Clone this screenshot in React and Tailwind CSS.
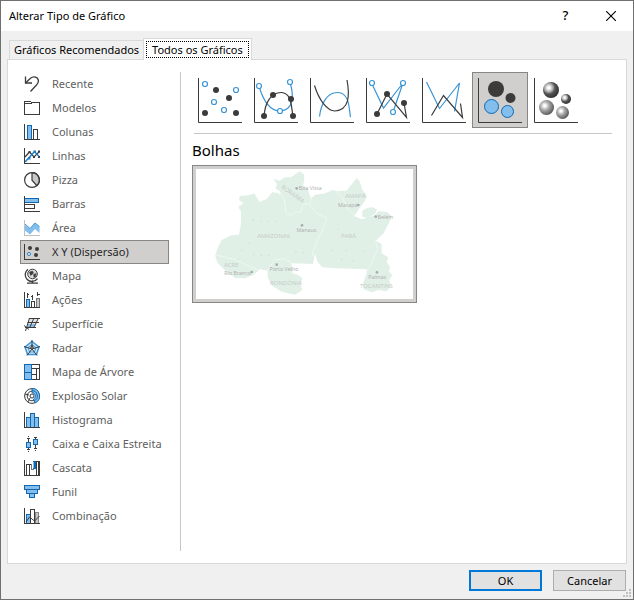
import { useState } from 'react'

const DARK = '#3b3b3b'
const BLUE = '#1f7ec7'
const DEEP = '#0f68b0'
const SKY = '#83beec'

const categories = [
  {
    name: 'Recente',
    icon: (
      <g fill="none" stroke={DARK} strokeWidth="1.3">
        <path d="M1.5 0.5v6.500h6.500" />
        <path d="M1.5 7 6.500 2.300C9.500-.3 14 1 14.400 4.600c.2 2-.6 3.200-1.900 4.400L6.500 15.500" />
      </g>
    ),
  },
  {
    name: 'Modelos',
    icon: (
      <g fill="none" stroke={DARK} shapeRendering="crispEdges">
        <path d="M.5 14.500V1.500h6l1 1h8v12zM.5 3.500h7" />
      </g>
    ),
  },
  {
    name: 'Colunas',
    icon: (
      <g fill="none" stroke={DARK} shapeRendering="crispEdges">
        <path d="M3.500 15V1.500h4V15" fill={SKY} stroke={DEEP} />
        <path d="M9.500 15V5.500h4V15" />
        <path d="M.5 0v15.500H16" />
      </g>
    ),
  },
  {
    name: 'Linhas',
    icon: (
      <g fill="none" stroke={DARK}>
        <path d="M1 9l4.500-5L10 9l5.500-5.500" strokeWidth="1.200" />
        <path d="M4.500 3h2v2h-2zM9 8h2v2H9zM14 2.500h2v2h-2zM14 8h2v2h-2z" fill={DARK} stroke="none" />
        <path d="M1 14 10.500 3.500l4.500 5" stroke={BLUE} strokeWidth="1.500" />
        <path d="M4 9h2.500v2.500H4zM9.500 2.500H12V5H9.500z" fill={BLUE} stroke="none" />
        <path d="M.5 0v15.500H16" shapeRendering="crispEdges" />
      </g>
    ),
  },
  {
    name: 'Pizza',
    icon: (
      <g fill="none" stroke={DARK} strokeWidth="1.200">
        <path d="M8 .7v7.500l4.800 5.500A7.400 7.400 0 0 0 8 .7z" fill="#c8c8c8" />
        <circle cx="8" cy="8" r="7.400" />
      </g>
    ),
  },
  {
    name: 'Barras',
    icon: (
      <g fill="none" stroke={DARK} shapeRendering="crispEdges">
        <path d="M1 2.500h13.500v4H1" fill={SKY} stroke={DEEP} />
        <path d="M1 8.500h9.500v4H1" />
        <path d="M.5 0v15.500H16" />
      </g>
    ),
  },
  {
    name: 'Área',
    icon: (
      <g fill="none">
        <path d="M.5 4.500 6 8.500l5-5.500 4.500 3.500V13L11 9l-5 5.500L.5 10z" fill={SKY} />
        <path d="M1 4l5 4.500 5-5.500 4.500 3.500" stroke="#4b9ad6" />
        <path d="M.5 0v15.500H16" stroke="#c0c0c0" shapeRendering="crispEdges" />
      </g>
    ),
  },
  {
    name: 'X Y (Dispersão)',
    icon: (
      <g fill={DARK}>
        <circle cx="6" cy="4" r="2" />
        <circle cx="13" cy="5" r="2" />
        <circle cx="12" cy="11" r="2" />
        <circle cx="5" cy="10" r="1.500" fill="#fff" stroke={BLUE} />
        <path d="M.5 0v15.500H16" fill="none" stroke={DARK} shapeRendering="crispEdges" />
      </g>
    ),
  },
  {
    name: 'Mapa',
    icon: (
      <g fill="none" stroke={DARK}>
        <circle cx="8.500" cy="6" r="4.800" fill="#dcdcdc" />
        <path d="M5.500 4l3-1 1 2-2 2-1 .5zM9.500 6.500l2.500-1-.5 3-1.500 1z" fill={DARK} strokeWidth=".5" />
        <path d="M4 1.200a6.800 6.800 0 1 0 9.500 9.500" strokeWidth="1.300" />
        <path d="M8.500 12.500v2M3 15.200h11" strokeWidth="1.300" />
      </g>
    ),
  },
  {
    name: 'Ações',
    icon: (
      <g fill="none" stroke={DARK} shapeRendering="crispEdges">
        <path d="M2.500 15V7.500h3V15" fill={SKY} stroke={DEEP} />
        <path d="M7.500 15v-5.500h3V15" />
        <path d="M12.500 15V6.500h3V15" fill="#c8c8c8" stroke="#777" />
        <path d="M3.500 1v5M3.500 2.500H5M8.500 3v5M7 4.500h2M13.500 0v4M13 2.500h2.500" />
        <path d="M.5 0v15.500H16" />
      </g>
    ),
  },
  {
    name: 'Superfície',
    icon: (
      <g fill="none" stroke={DARK}>
        <path d="M5 3h9.500l-2 5-2 4H2z" fill="#e3e3e3" stroke="none" />
        <path d="M4 8h7l-2 4H3z" fill={SKY} stroke="none" />
        <path d="M5 2.500h11M3.500 6.500H15M1 11.500h11M5.500 2 1.500 15M10 2 5.500 12M14.500 2 9.500 12M0 9.500l5 4" />
      </g>
    ),
  },
  {
    name: 'Radar',
    icon: (
      <g fill="none" stroke={DARK}>
        <path d="M8 1.500 15 7l-2.500 7.500h-9L1 7z" fill="#d4eafa" stroke="#3a95d6" strokeWidth="1.500" />
        <path d="M8 4.500l4 3-1.500 4.500h-5L4 7.500z" stroke="#3a95d6" />
        <path d="M8 0v9l5 6.500M8 9l-5 6.500M0 6.500 8 9l8-2.500" />
        <path d="M8 5l1.500 3M8 5 6.500 8" />
      </g>
    ),
  },
  {
    name: 'Mapa de Árvore',
    icon: (
      <g fill="none" shapeRendering="crispEdges">
        <path d="M8 .5h7.500v15H8M8 4.500h7.500M12.500 4.500v11M8 10.500h4.500" stroke={DARK} />
        <path d="M.5.5h7v15h-7zM.5 8.500h7" fill={SKY} stroke={DEEP} />
      </g>
    ),
  },
  {
    name: 'Explosão Solar',
    icon: (
      <g fill="none">
        <circle cx="8" cy="8" r="7.400" stroke={DARK} />
        <circle cx="8" cy="8" r="4.800" stroke={DARK} />
        <path d="M8 .5a7.500 7.500 0 0 1 3 14.400L9.500 11A3.300 3.300 0 0 0 8 4.700z" fill={SKY} stroke={DEEP} />
        <path d="M8 2.700a5.300 5.300 0 0 1 2.300 10.100" stroke={DEEP} />
        <circle cx="8" cy="8" r="2" stroke={DARK} fill="#fff" />
        <path d="M1 6l4 1M4 14l2-4" stroke={DARK} />
      </g>
    ),
  },
  {
    name: 'Histograma',
    icon: (
      <g shapeRendering="crispEdges">
        <path d="M2.500 15.500v-10h4v-4h4v4h4v10z" fill={SKY} stroke={DEEP} />
        <path d="M6.500 5v10M10.500 4v11" fill="none" stroke={DEEP} />
        <path d="M.5 0v15.500H16" fill="none" stroke={DARK} />
      </g>
    ),
  },
  {
    name: 'Caixa e Caixa Estreita',
    icon: (
      <g shapeRendering="crispEdges">
        <path d="M4.500 2v12M3 2.500h3M3 13.500h3M11.500 1v11M10 1.500h3M10 12.500h3M4.500 15v1M11.500 14v1M4.500 0v1" fill="none" stroke={DARK} />
        <path d="M2.500 6.500h4v5h-4zM9.500 3.500h4v5h-4z" fill={SKY} stroke={DEEP} />
      </g>
    ),
  },
  {
    name: 'Cascata',
    icon: (
      <g fill="none" stroke={DARK} shapeRendering="crispEdges">
        <path d="M2.500 15V4.500h3V15M5.500 4.500h2M12.500 15V1.500h2V15" />
        <path d="M7.500 4v5.500h2" stroke="#777" />
        <path d="M9 1h3v8H9z" fill={DEEP} stroke="none" />
        <path d="M9.500 2v6" stroke={SKY} />
        <path d="M.5 0v15.500H15.500V1" />
      </g>
    ),
  },
  {
    name: 'Funil',
    icon: (
      <g fill={SKY} stroke={DEEP} shapeRendering="crispEdges">
        <path d="M.5 1.500h15v4H.5zM2.500 5.500h11v4h-11zM5.500 9.500h5v4h-5z" />
      </g>
    ),
  },
  {
    name: 'Combinação',
    icon: (
      <g stroke={DARK} fill="none">
        <path d="M2.500 15V6.500h4V15" fill={SKY} stroke={DEEP} shapeRendering="crispEdges" />
        <path d="M11 15V4.500h3.500V15" fill="#c8c8c8" stroke="#888" shapeRendering="crispEdges" />
        <path d="M6.500 15V1.500h4V15" fill="#fff" shapeRendering="crispEdges" />
        <path d="M2 14 5.500 9l5 4L15.500 8" />
        <path d="M.5 0v15.500H16" shapeRendering="crispEdges" />
      </g>
    ),
  },
]

function Solid({ points, r = 3 }) {
  return points.map(([x, y]) => <circle key={`${x}-${y}`} cx={x} cy={y} r={r} fill={DARK} />)
}

function Hollow({ points }) {
  return points.map(([x, y]) => (
    <circle key={`${x}-${y}`} cx={x} cy={y} r="2.500" fill="#fff" stroke="#3a95d6" strokeWidth="1.200" />
  ))
}

function Line({ d, color = DARK }) {
  return <path d={d} fill="none" stroke={color} strokeWidth="1.200" />
}

const subtypes = [
  {
    name: 'Dispersão',
    art: (
      <>
        <Hollow points={[[13, 12], [44, 18], [22, 30], [32, 38]]} />
        <Solid points={[[24, 18], [37, 26], [13, 41], [44, 41]]} />
      </>
    ),
  },
  {
    name: 'Dispersão com Linhas Suaves e Marcadores',
    art: (
      <>
        <Line d="M11 14C15 28 22 39 32 39C46 38 46 24 42 10" color="#3a95d6" />
        <Line d="M16 44C17 32 22 20 34 20.500C44 22 43 34 45 44" />
        <Hollow points={[[11, 14], [42, 10], [32, 39]]} />
        <Solid points={[[25, 23], [43, 27], [16, 44], [45, 44]]} />
      </>
    ),
  },
  {
    name: 'Dispersão com Linhas Suaves',
    art: (
      <>
        <Line d="M15.500 44.500C17 32 23 20 34 20.500C46 21 45 38 46.500 45" color="#3a95d6" />
        <Line d="M10.500 13.500C15 28 23 39 31 39C45 38 46 24 43 8" />
      </>
    ),
  },
  {
    name: 'Dispersão com Linhas Retas e Marcadores',
    art: (
      <>
        <Line d="M11.500 11 23.500 36 43 11 33 40" color="#3a95d6" />
        <Line d="M17 42 27 22 46.500 45.500 44 31" />
        <Hollow points={[[12, 11], [43, 11], [33, 40]]} />
        <Solid points={[[27, 22], [17, 42], [44, 31]]} />
      </>
    ),
  },
  {
    name: 'Dispersão com Linhas Retas',
    art: (
      <>
        <Line d="M10.500 10 23.500 36.500 43.500 11 38.500 39.500" color="#3a95d6" />
        <Line d="M15.500 43.500 27.500 23.500 46.500 45.500 44.500 31.500" />
      </>
    ),
  },
  {
    name: 'Bolhas',
    art: (
      <>
        <Solid points={[[24, 17]]} r={8} />
        <Solid points={[[38.5, 26]]} r={5} />
        <g fill={SKY} stroke={DEEP}>
          <circle cx="19.500" cy="34.500" r="7" />
          <circle cx="35.500" cy="39.500" r="6" />
        </g>
      </>
    ),
  },
  {
    name: 'Bolhas 3D',
    art: (
      <>
        <defs>
          <radialGradient id="ball-dark" cx=".36" cy=".36" r=".65">
            <stop offset=".1" stopColor="#fff" />
            <stop offset=".4" stopColor="#aaa" />
            <stop offset=".6" stopColor="#555" />
            <stop offset="1" stopColor="#333" />
          </radialGradient>
          <radialGradient id="ball-light" cx=".38" cy=".38" r=".65">
            <stop offset=".1" stopColor="#fff" />
            <stop offset=".45" stopColor="#aaa" />
            <stop offset="1" stopColor="#555" />
          </radialGradient>
        </defs>
        <circle cx="23" cy="18" r="8" fill="url(#ball-dark)" />
        <circle cx="38" cy="27" r="5" fill="url(#ball-dark)" />
        <circle cx="18.500" cy="35.500" r="7.500" fill="url(#ball-light)" />
        <circle cx="34.500" cy="40.500" r="6.500" fill="url(#ball-light)" />
      </>
    ),
  },
]

const states = [
  { name: 'AMAZONAS', x: 266, y: 293 },
  { name: 'PARÁ', x: 491, y: 293 },
  { name: 'AMAPÁ', x: 511, y: 175 },
  { name: 'ACRE', x: 139, y: 382 },
  { name: 'RONDÔNIA', x: 303, y: 436 },
  { name: 'TOCANTINS', x: 574, y: 444 },
]

const capitals = [
  { name: 'Boa Vista', x: 376, y: 149, dot: [335, 145] },
  { name: 'Macapá', x: 488, y: 201, dot: [520, 195] },
  { name: 'Belém', x: 601, y: 237, dot: [572, 230] },
  { name: 'Manaus', x: 364, y: 277, dot: [351, 256] },
  { name: 'Porto Velho', x: 297, y: 392, dot: [275, 374] },
  { name: 'Rio Branco', x: 158, y: 406, dot: [200, 396] },
  { name: 'Palmas', x: 577, y: 418, dot: [576, 397] },
]

const towns = [
  [205, 240], [229, 244], [251, 244], [272, 244], [460, 268], [193, 310], [170, 331], [206, 343], [229, 346],
  [252, 346], [333, 335], [355, 338], [160, 358], [442, 331], [484, 331], [538, 334], [470, 358], [505, 362],
]

function MapPreview() {
  return (
    <svg viewBox="33 87 651 390" className="block w-full" role="img" aria-label="Mapa da região Norte">
      <path
        fill="#e1f0e6"
        d="M264 116 284 122 300 112 318 112 344 94 357 103 358 125 353 134 368 146 372 160 378 174 392 164 420 160 444 150 456 154 472 152 484 152 494 140 515 114 524 124 532 150 546 166 540 182 522 206 508 228 530 238 570 226 580 214 606 216 620 228 612 248 596 280 572 302 590 312 590 340 610 352 605 366 615 380 612 395 622 405 613 420 618 440 604 454 580 450 560 457 536 448 534 430 545 400 545 388 440 384 412 382 398 366 390 342 384 372 320 370 322 400 338 404 352 415 346 432 352 450 330 464 290 455 262 438 248 412 248 392 225 388 205 405 180 415 150 414 125 395 98 370 90 345 100 320 110 300 140 286 162 284 168 250 168 215 160 200 176 190 162 180 164 168 190 166 208 160 216 174 224 186 246 176 262 156 280 160 286 165 285 154 272 146 276 132z"
      />
      <path fill="#e1f0e6" d="M532 212 546 204 562 202 576 208 570 222 548 234 532 230z" />
      <path fill="none" stroke="#fff" strokeWidth="3" d="M546 184l-18 18-6 16-16 12M524 204l-4 22 10 10M528 206l14-16 10 4" />
      <g fill="none" stroke="#fff" strokeWidth="2" strokeDasharray="5 3">
        <path d="M286 158l12 22 6 40 14 6 14-10 14 2 8-24 22-4 2-18" />
        <path d="M376 196l20 24 30 14-14 40-14 24-16 44 6 10" />
        <path d="M90 344l66 16 30 16 44 18 18-4 20-30 30-4 24 14" />
        <path d="M456 156l18 20 14 32 18 16" />
        <path d="M572 304l6 24-16 36-16 28" />
      </g>
      <g fill="#cbdad0">
        {towns.map(([x, y]) => (
          <circle key={`${x}-${y}`} cx={x} cy={y} r="2" />
        ))}
      </g>
      <g fill="#c4cac6" fontSize="18" fontFamily="Open Sans, sans-serif" textAnchor="middle">
        {states.map((s) => (
          <text key={s.name} x={s.x} y={s.y}>{s.name}</text>
        ))}
        <text transform="translate(320 167) rotate(35)">RORAIMA</text>
      </g>
      <g fill="#aeabae" fontSize="16" fontFamily="Open Sans, sans-serif" textAnchor="middle">
        {capitals.map((c) => (
          <g key={c.name}>
            <circle cx={c.dot[0]} cy={c.dot[1]} r="4" fill="#a9a9a9" />
            <text x={c.x} y={c.y}>{c.name}</text>
          </g>
        ))}
      </g>
    </svg>
  )
}

function TitleBar() {
  return (
    <header className="flex h-[30px] items-center bg-white pl-2">
      <h1 className="flex-1 text-[11px]">Alterar Tipo de Gráfico</h1>
      <button aria-label="Ajuda" className="flex h-full w-[45px] items-center justify-center text-[13px] font-medium">
        ?
      </button>
      <button aria-label="Fechar" className="flex h-full w-[45px] items-center justify-center">
        <svg viewBox="0 0 10 10" className="size-[10px]">
          <path d="M0 0l10 10M10 0 0 10" stroke="#000" strokeWidth="1.100" />
        </svg>
      </button>
    </header>
  )
}

function Tabs() {
  return (
    <div role="tablist" className="flex items-end px-2 pt-[7px]">
      <button
        role="tab"
        aria-selected="false"
        className="h-[19px] border border-r-0 border-b-0 border-[#d9d9d9] px-1 text-[11px] leading-4 whitespace-nowrap"
      >
        Gráficos Recomendados
      </button>
      <button
        role="tab"
        aria-selected="true"
        className="relative -mb-px h-[22px] border border-b-0 border-[#d9d9d9] bg-white px-0.5 text-[11px] whitespace-nowrap"
      >
        <span className="block border border-dotted border-black px-[5px] leading-[15px]">Todos os Gráficos</span>
      </button>
    </div>
  )
}

export default function App() {
  const [category, setCategory] = useState('X Y (Dispersão)')
  const [subtype, setSubtype] = useState('Bolhas')

  return (
    <div className="relative flex min-h-screen flex-col border border-[#707070] bg-[#f0f0f0] font-['Noto_Sans',sans-serif] text-black">
      <TitleBar />
      <Tabs />
      <main className="mx-1.5 flex flex-1 border border-[#d9d9d9] bg-white pt-3 pb-3">
        <nav aria-label="Tipos de gráfico" className="w-[173px] shrink-0 border-r border-[#c6c6c6] pl-3">
          <ul className="w-[149px]">
            {categories.map((c) => (
              <li key={c.name}>
                <button
                  onClick={() => setCategory(c.name)}
                  className={`flex h-6 w-full items-center gap-3 border pl-[3px] text-[11px] whitespace-nowrap ${
                    c.name === category
                      ? 'border-[#868686] bg-[#d1cfce] text-[#262626]'
                      : 'border-transparent text-[#606060]'
                  }`}
                >
                  <svg viewBox="0 0 16 16" className="size-4 shrink-0">
                    {c.icon}
                  </svg>
                  {c.name}
                </button>
              </li>
            ))}
          </ul>
        </nav>
        <section className="min-w-0 flex-1 pr-3.5 pl-[11px]">
          <div className="flex">
            {subtypes.map((s) => (
              <button
                key={s.name}
                aria-label={s.name}
                onClick={() => setSubtype(s.name)}
                className={`size-14 border ${
                  s.name === subtype ? 'border-[#868686] bg-[#d1cfce]' : 'border-transparent'
                }`}
              >
                <svg viewBox="1 1 54 54" className="block size-full">
                  <path d="M6.500 6v44.500H50" fill="none" stroke={DARK} />
                  {s.art}
                </svg>
              </button>
            ))}
          </div>
          <hr className="mt-[5px] ml-0.5 border-[#c6c6c6]" />
          <h2 className="mt-1 text-[15px] leading-6">{subtype}</h2>
          <button className="mt-[3px] block w-[225px] border border-[#868686] bg-[#d1cfce] p-[3px]">
            <span className="block bg-white">
              <MapPreview />
            </span>
          </button>
        </section>
      </main>
      <footer className="flex justify-end gap-[11px] pt-1.5 pr-[7px] pb-2">
        <button className="h-[21px] w-[73px] border-2 border-[#0078d7] bg-[#e1e1e1] text-[11px] leading-4">OK</button>
        <button className="h-[21px] w-[73px] border border-[#adadad] bg-[#e1e1e1] text-[11px] leading-4">Cancelar</button>
        <svg viewBox="0 0 8 8" className="absolute right-0.5 bottom-0.5 size-2" fill="#bfbfbf">
          <path d="M6 0h2v2H6zM3 3h2v2H3zM6 3h2v2H6zM0 6h2v2H0zM3 6h2v2H3zM6 6h2v2H6z" />
        </svg>
      </footer>
    </div>
  )
}
